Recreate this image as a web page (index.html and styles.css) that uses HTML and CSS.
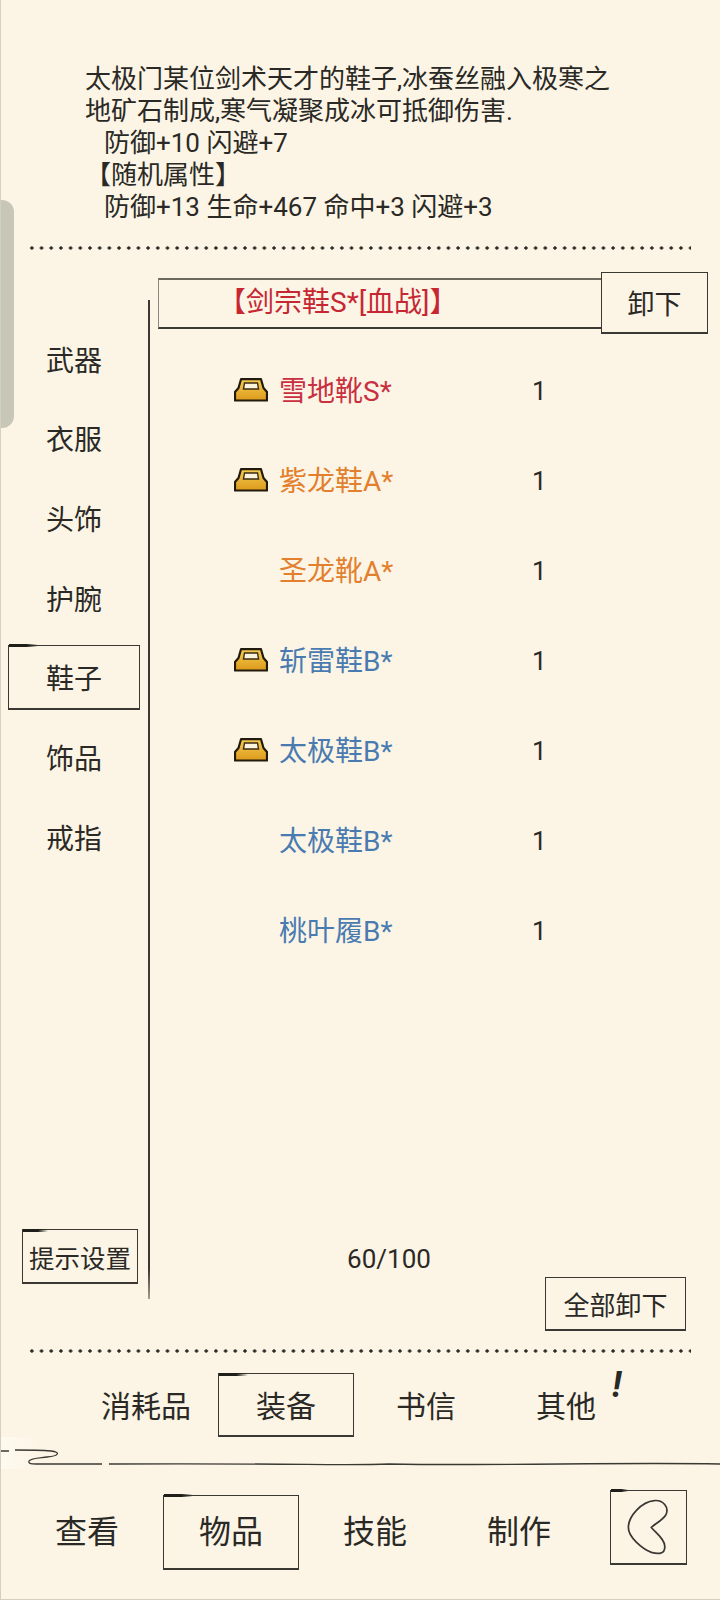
FILE: index.html
```html
<!DOCTYPE html>
<html lang="zh-CN">
<head>
    <meta name="viewport" content="width=device-width, initial-scale=1.0">
    <meta charset="UTF-8">
    <title>物品</title>
    <link rel="stylesheet" href="styles.css">
</head>
<body>
    <div id="page">
        <div class="scroll-handle"></div>

        <div class="desc">
            <p>太极门某位剑术天才的鞋子,冰蚕丝融入极寒之</p>
            <p>地矿石制成,寒气凝聚成冰可抵御伤害.</p>
            <p class="indent">防御+10 闪避+7</p>
            <p>【随机属性】</p>
            <p class="indent">防御+13 生命+467 命中+3 闪避+3</p>
        </div>
        <div class="dots"></div>

        <div class="main">
            <div class="side">
                <div class="side-item">武器</div>
                <div class="side-item">衣服</div>
                <div class="side-item">头饰</div>
                <div class="side-item">护腕</div>
                <div class="side-item sketch">鞋子</div>
                <div class="side-item">饰品</div>
                <div class="side-item">戒指</div>
                <button class="tips-button sketch">提示设置</button>
            </div>
            <div class="rule"></div>
            <div class="content">
                <div class="equipped-row">
                    <div class="equipped">【剑宗鞋S*[血战]】</div>
                    <button class="unequip-button sketch plain-start">卸下</button>
                </div>

                <div class="item-list">
                    <div class="item">
                        <svg class="chest" viewBox="0 0 34 24"><use href="#chest-icon"/></svg>
                        <span class="item-name rank-s">雪地靴S*</span>
                        <span class="item-count">1</span>
                    </div>
                    <div class="item">
                        <svg class="chest" viewBox="0 0 34 24"><use href="#chest-icon"/></svg>
                        <span class="item-name rank-a">紫龙鞋A*</span>
                        <span class="item-count">1</span>
                    </div>
                    <div class="item">
                        <span class="chest"></span>
                        <span class="item-name rank-a">圣龙靴A*</span>
                        <span class="item-count">1</span>
                    </div>
                    <div class="item">
                        <svg class="chest" viewBox="0 0 34 24"><use href="#chest-icon"/></svg>
                        <span class="item-name rank-b">斩雷鞋B*</span>
                        <span class="item-count">1</span>
                    </div>
                    <div class="item">
                        <svg class="chest" viewBox="0 0 34 24"><use href="#chest-icon"/></svg>
                        <span class="item-name rank-b">太极鞋B*</span>
                        <span class="item-count">1</span>
                    </div>
                    <div class="item">
                        <span class="chest"></span>
                        <span class="item-name rank-b">太极鞋B*</span>
                        <span class="item-count">1</span>
                    </div>
                    <div class="item">
                        <span class="chest"></span>
                        <span class="item-name rank-b">桃叶履B*</span>
                        <span class="item-count">1</span>
                    </div>
                </div>

                <div class="list-foot">
                    <div class="capacity">60/100</div>
                    <button class="unequip-all sketch plain-start">全部卸下</button>
                </div>
            </div>
        </div>
        <div class="dots"></div>

        <div class="tabs">
            <div class="tab">消耗品</div>
            <div class="tab sketch">装备</div>
            <div class="tab">书信</div>
            <div class="tab">其他<span class="alert">!</span></div>
        </div>

        <div class="swirl">
            <svg viewBox="0 0 720 32" width="720" height="32">
                <path class="swirl-line" d="M0 14 H8 M14 13 C26 13 38 13 50 14 C60 15 58 19 46 20 C38 21 30 21 28 24 C27 27 31 27 35 27 H101"/>
                <path class="swirl-line" d="M108 27 C300 26 340 29 388 27 C500 29 620 25 720 27"/>
            </svg>
        </div>

        <div class="nav">
            <div class="nav-item">查看</div>
            <div class="nav-item sketch">物品</div>
            <div class="nav-item">技能</div>
            <div class="nav-item">制作</div>
            <button class="back-button sketch">
                <svg viewBox="0 0 77 74" width="74" height="71">
                    <path class="back-icon" d="M44 10 C53 9 60 17 56 25 C52 31 45 34 41 38 C46 44 55 50 55 58 C55 66 48 66 41 64 C31 60 17 48 17 38 C17 26 31 11 44 10 Z"/>
                </svg>
            </button>
        </div>
    </div>

    <svg class="sprites" width="0" height="0">
        <defs>
            <linearGradient id="chest-gold" x1="0" y1="0" x2="0" y2="1">
                <stop offset="0" stop-color="#f6cd50"/>
                <stop offset="1" stop-color="#dc9a1c"/>
            </linearGradient>
            <g id="chest-icon">
                <path d="M7 1.2 H27 L29.5 10 L33 14 V22.5 H1 V14 L4.5 10 Z" fill="url(#chest-gold)" stroke="#221a0c" stroke-width="2.2" stroke-linejoin="round"/>
                <path d="M10.5 5 H23.5 L24.5 11 H9.5 Z" fill="#fbf3dc" stroke="#3a2c12" stroke-width="1.4"/>
            </g>
        </defs>
    </svg>
</body>
</html>
```

FILE: styles.css
```css
body {
    margin: 0;
    padding: 0;
    background-color: #fcf5e6;
    color: #2a2925;
    font-family: Roboto, "Noto Sans CJK SC", sans-serif;
}

button {
    font-family: inherit;
    color: inherit;
    background: none;
    padding: 0;
    cursor: pointer;
}

#page {
    position: relative;
    display: flex;
    flex-direction: column;
    width: 720px;
    height: 1600px;
    box-sizing: border-box;
    overflow: hidden;
    border-left: 1px solid #d3cfc2;
    border-bottom: 1px solid #d3cfc2;
}

.scroll-handle {
    position: absolute;
    left: 0;
    top: 200px;
    width: 13px;
    height: 228px;
    background-color: #c8c6b7;
    border-radius: 0 12px 12px 0;
}

.sketch {
    position: relative;
    box-sizing: border-box;
    border: 1.5px solid #3a3832;
    border-bottom-width: 2.5px;
}

.sketch::before {
    content: "";
    position: absolute;
    left: 0;
    top: -1.5px;
    width: 22%;
    height: 3px;
    background: linear-gradient(to right, #1f1e1a 60%, transparent);
}

.plain-start::before {
    display: none;
}

/* description */
.desc {
    height: 246px;
    box-sizing: border-box;
    padding: 63px 0 0 84px;
    font-size: 26px;
    line-height: 32px;
}

.desc p {
    margin: 0;
}

.indent {
    padding-left: 19px;
}

.dots {
    height: 4px;
    margin: 0 29px 0 26px;
    background-image: radial-gradient(circle at center, #2a2925 1.4px, transparent 1.9px);
    background-size: 9.7px 4px;
}

/* middle */
.main {
    display: grid;
    grid-template-columns: 147px 2px 1fr;
    height: 1099px;
}

.side {
    display: flex;
    flex-direction: column;
    gap: 14.7px;
    padding: 76px 0 65px 7px;
}

.side-item {
    display: flex;
    align-items: center;
    justify-content: center;
    width: 132px;
    height: 65px;
    font-size: 28px;
}

.tips-button {
    width: 116px;
    height: 55px;
    margin-top: auto;
    margin-left: 14px;
    font-size: 25.5px;
    white-space: nowrap;
}

.rule {
    margin: 50px 0 50px;
    background: linear-gradient(#3a3832 97%, #a09c8e);
}

.content {
    display: flex;
    flex-direction: column;
    padding-left: 8px;
    padding-top: 22px;
}

.equipped-row {
    display: flex;
    align-items: center;
    padding-right: 12px;
}

.equipped {
    flex: 1;
    height: 51px;
    box-sizing: border-box;
    padding-left: 59px;
    border-left: 1.5px solid #8c887a;
    border-top: 2px solid #6d695c;
    border-bottom: 2px solid #3a3832;
    color: #c62833;
    font-size: 28px;
    line-height: 46px;
}

.unequip-button {
    width: 107px;
    height: 62px;
    font-size: 27px;
}

.item-list {
    margin-top: 10px;
}

.item {
    display: flex;
    align-items: center;
    height: 90px;
    padding-left: 76px;
    font-size: 28px;
}

.chest {
    width: 34px;
    height: 24px;
    margin-top: 1px;
    margin-right: 11px;
}

.item-name {
    width: 253px;
}

.rank-s {
    color: #c9303f;
}

.rank-a {
    color: #e2802e;
}

.rank-b {
    color: #4a7bb0;
}

.item-count {
    padding-top: 4px;
    font-size: 26px;
}

.list-foot {
    display: flex;
    flex-direction: column;
    margin-top: auto;
    padding-bottom: 18px;
}

.capacity {
    width: 120px;
    margin-left: 171px;
    text-align: center;
    font-size: 26px;
    line-height: 30px;
}

.unequip-all {
    align-self: flex-end;
    width: 141px;
    height: 54px;
    margin-top: 3px;
    margin-right: 34px;
    font-size: 26px;
}

/* bottom tabs */
.tabs {
    display: grid;
    grid-template-columns: repeat(4, 136px);
    column-gap: 4px;
    padding: 20px 0 0 77px;
    height: 64px;
}

.tab {
    display: flex;
    align-items: center;
    justify-content: center;
    position: relative;
    height: 64px;
    padding-bottom: 2px;
    box-sizing: border-box;
    font-size: 30px;
}

.alert {
    position: absolute;
    left: 114px;
    top: -10px;
    font-size: 36px;
    line-height: 44px;
    font-weight: bold;
    font-style: italic;
}

.swirl {
    height: 32px;
    background: linear-gradient(to right, #fffaf0 0, #fcf5e6 40px);
}

.swirl svg {
    display: block;
}

.swirl-line {
    fill: none;
    stroke: #3a3832;
    stroke-width: 1.3;
}

.nav {
    display: grid;
    grid-template-columns: repeat(4, 136px) 77px;
    column-gap: 8px;
    align-items: center;
    height: 130px;
    padding-left: 18px;
    padding-bottom: 4px;
    box-sizing: border-box;
}

.nav-item {
    display: flex;
    align-items: center;
    justify-content: center;
    height: 75px;
    padding-bottom: 6px;
    box-sizing: border-box;
    font-size: 32px;
}

.back-button {
    width: 77px;
    height: 75px;
    margin-left: 15px;
    margin-bottom: 10px;
}

.back-icon {
    fill: none;
    stroke: #3a3832;
    stroke-width: 1.8;
}

.sprites {
    position: absolute;
}
```
